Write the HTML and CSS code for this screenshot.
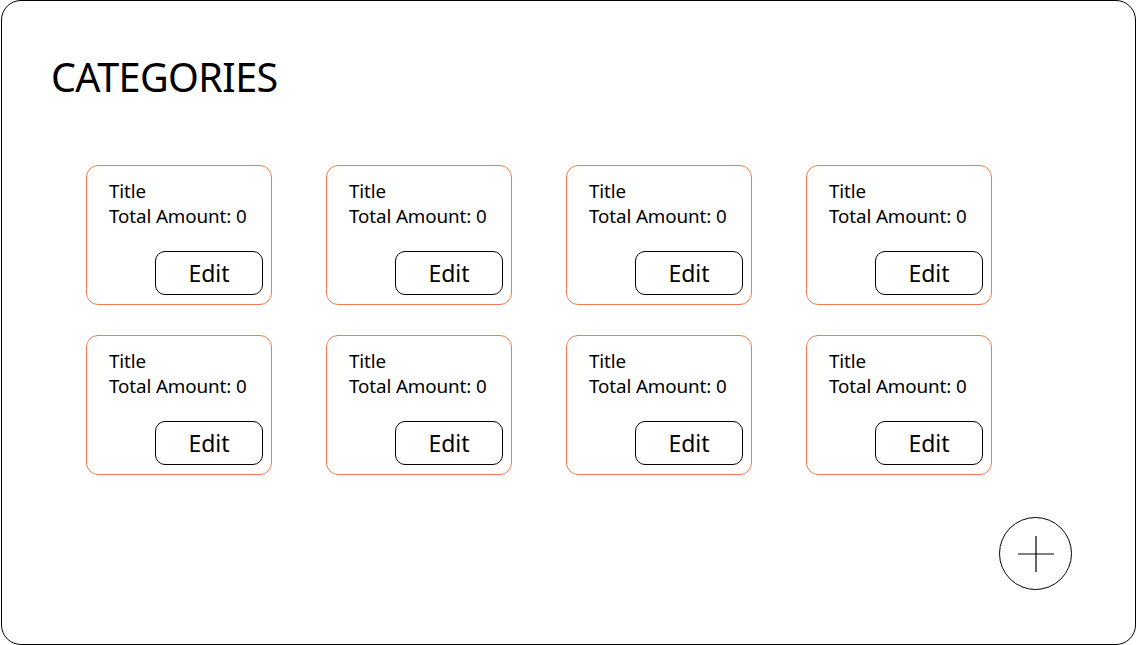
FILE: index.html
```html
<!DOCTYPE html>
<html>
<head>
<meta charset="utf-8">
<link rel="stylesheet" href="styles.css">
</head>
<body>
<div class="frame">
  <h1 class="heading">CATEGORIES</h1>
  <div class="grid">
    <div class="card"><div class="card-title">Title</div><div class="card-amount">Total Amount: 0</div><button class="edit">Edit</button></div>
    <div class="card"><div class="card-title">Title</div><div class="card-amount">Total Amount: 0</div><button class="edit">Edit</button></div>
    <div class="card"><div class="card-title">Title</div><div class="card-amount">Total Amount: 0</div><button class="edit">Edit</button></div>
    <div class="card"><div class="card-title">Title</div><div class="card-amount">Total Amount: 0</div><button class="edit">Edit</button></div>
    <div class="card"><div class="card-title">Title</div><div class="card-amount">Total Amount: 0</div><button class="edit">Edit</button></div>
    <div class="card"><div class="card-title">Title</div><div class="card-amount">Total Amount: 0</div><button class="edit">Edit</button></div>
    <div class="card"><div class="card-title">Title</div><div class="card-amount">Total Amount: 0</div><button class="edit">Edit</button></div>
    <div class="card"><div class="card-title">Title</div><div class="card-amount">Total Amount: 0</div><button class="edit">Edit</button></div>
  </div>
  <div class="fab-row">
    <button class="fab" aria-label="Add">
      <svg width="38" height="38" viewBox="0 0 38 38"><path d="M19 1V37M1 19H37" stroke="#000" stroke-width="1.2" fill="none"/></svg>
    </button>
  </div>
</div>
</body>
</html>
```
FILE: styles.css
```css
* { box-sizing: border-box; }
html, body { margin: 0; padding: 0; background: #fff; }
body { font-family: "Noto Sans", "Open Sans", sans-serif; color: #000; }
.frame {
  width: 1135px;
  height: 645px;
  margin: 0 0 0 1px;
  border: 1.3px solid #000;
  border-radius: 20px;
  padding: 49px 0 0 49px;
  display: flex;
  flex-direction: column;
}
.heading {
  margin: 0;
  font-weight: 400;
  font-size: 39.5px;
  line-height: 54px;
  letter-spacing: -0.6px;
}
.grid {
  margin: 61px 0 0 35px;
  display: grid;
  grid-template-columns: repeat(4, 186px);
  column-gap: 54px;
  row-gap: 30px;
}
.card {
  height: 140px;
  border: 1px solid #f47a4f;
  border-radius: 12px;
  padding: 13px 8px 9px 22px;
  display: flex;
  flex-direction: column;
}
.card-title, .card-amount {
  font-size: 18.8px;
  line-height: 25px;
  letter-spacing: -0.1px;
}
.edit {
  margin-top: auto;
  align-self: flex-end;
  width: 108px;
  height: 44px;
  border: 1px solid #000;
  border-radius: 10px;
  background: #fff;
  font-family: inherit;
  font-size: 23px;
  color: #000;
  padding: 0;
}
.fab-row {
  display: flex;
  justify-content: flex-end;
  padding-right: 63px;
  margin-top: 42px;
}
.fab {
  width: 73px;
  height: 73px;
  border-radius: 50%;
  border: 1px solid #000;
  background: #fff;
  padding: 0;
  display: flex;
  align-items: center;
  justify-content: center;
}
```
